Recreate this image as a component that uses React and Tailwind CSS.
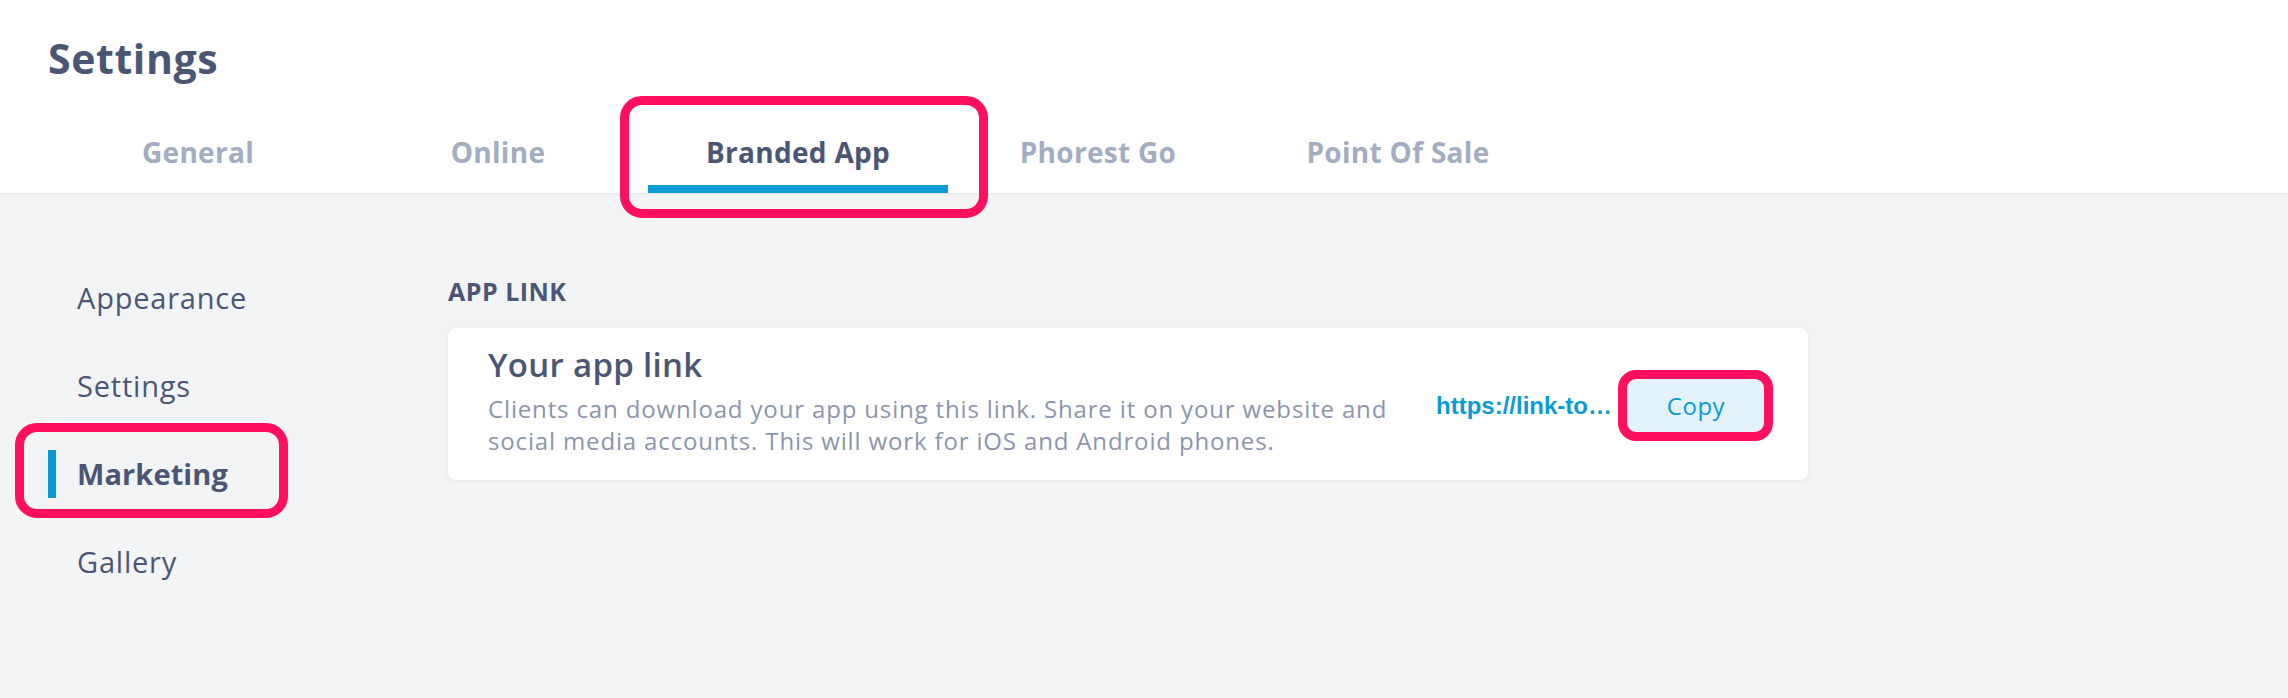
import React from "react";

const tabs = ["General", "Online", "Branded App", "Phorest Go", "Point Of Sale"];
const sideItems = ["Appearance", "Settings", "Marketing", "Gallery"];

export default function App() {
  const activeTab = "Branded App";
  const activeSide = "Marketing";

  return (
    <div className="relative w-full h-[698px] overflow-hidden bg-[#f3f4f6] font-['Open_Sans',sans-serif] text-[#4b5675]">
      {/* header */}
      <div className="bg-white pl-[48px] pt-[34px] shadow-[0_1px_3px_rgba(0,0,0,0.05)]">
        <h1 className="text-[41px] leading-[48px] font-bold tracking-[0.6px] text-[#4b5675]">Settings</h1>
        <nav className="flex h-[111px]">
          {tabs.map((t) => (
            <div key={t} className="w-[300px] flex flex-col items-center">
              <span
                className={`mt-[52px] text-[28px] leading-[36px] font-bold tracking-[0.3px] ${
                  t === activeTab ? "text-[#4b5675]" : "text-[#a3adc1]"
                }`}
              >
                {t}
              </span>
              {t === activeTab && <div className="mt-auto h-[8px] w-full bg-[#0a9bd4]"></div>}
            </div>
          ))}
        </nav>
      </div>

      <div className="flex pl-[48px]">
        {/* side menu */}
        <div className="w-[400px] pt-[81px] flex flex-col gap-[40px]">
          {sideItems.map((s) => (
            <div key={s} className="flex items-center h-[48px]">
              <div className={`w-[8px] h-[48px] ${s === activeSide ? "bg-[#0a9bd4]" : ""}`}></div>
              <span
                className={`ml-[21px] text-[29px] leading-[48px] ${
                  s === activeSide ? "font-bold tracking-[0.1px]" : "font-normal tracking-[0.8px]"
                }`}
              >
                {s}
              </span>
            </div>
          ))}
        </div>

        {/* content */}
        <div className="w-[1360px] pt-[82px] flex flex-col">
          <h2 className="text-[25px] leading-[32px] font-bold tracking-[0.5px]">APP LINK</h2>
          <div className="mt-[21px] bg-white rounded-[8px] shadow-[0_1px_4px_rgba(0,0,0,0.06)] flex pl-[40px] pr-[40px] pt-[17px] pb-[23px]">
            <div className="w-[920px]">
              <h3 className="text-[33px] leading-[40px] font-semibold tracking-[0.3px]">Your app link</h3>
              <p className="mt-[8px] text-[24px] leading-[32px] tracking-[0.85px] text-[#8b95ac]">
                Clients can download your app using this link. Share it on your website and social media
                accounts. This will work for iOS and Android phones.
              </p>
            </div>
            <div className="ml-auto self-center mt-[10px] flex items-center gap-[12px]">
              <span className="font-['Liberation_Sans',Arial,sans-serif] font-bold text-[24px] text-[#0a9bd4]">
                https://link-to…
              </span>
              <button className="w-[144px] h-[60px] rounded-[8px] bg-[#e3f1f9] text-[24px] tracking-[0.5px] text-[#0a9bd4]">
                Copy
              </button>
            </div>
          </div>
        </div>
      </div>

      {/* annotation highlights */}
      <div className="pointer-events-none absolute left-[620px] top-[96px] w-[368px] h-[122px] rounded-[22px] border-[9px] border-[#ff0f5d]"></div>
      <div className="pointer-events-none absolute left-[15px] top-[423px] w-[273px] h-[95px] rounded-[22px] border-[9px] border-[#ff0f5d]"></div>
      <div className="pointer-events-none absolute left-[1618px] top-[370px] w-[155px] h-[71px] rounded-[18px] border-[9px] border-[#ff0f5d]"></div>
    </div>
  );
}
